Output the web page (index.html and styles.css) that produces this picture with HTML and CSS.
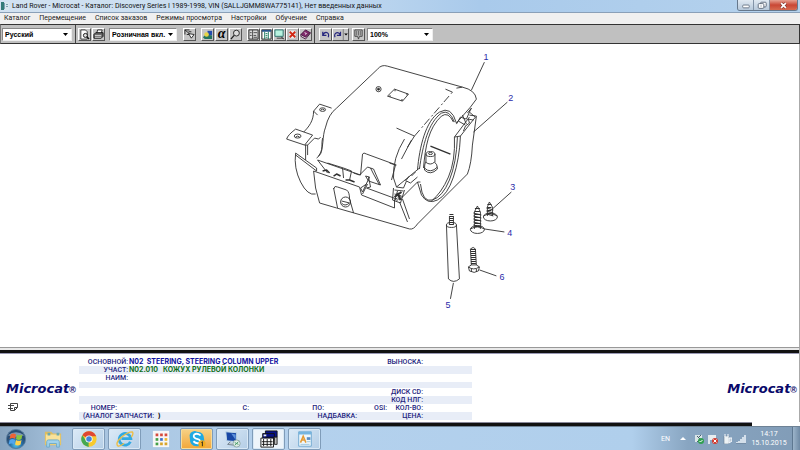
FILE: index.html
```html
<!DOCTYPE html>
<html lang="ru">
<head>
<meta charset="utf-8">
<title>Land Rover - Microcat</title>
<link rel="stylesheet" href="styles.css">
</head>
<body>
<header class="titlebar">
  <svg class="app-icon" viewBox="0 0 9 8"><path d="M0 0h3v8H0z" fill="#347b78"/><path d="M4 0h4v8H4z" fill="#d9e7ee"/><path d="M3 1h1v6H3zM5 2h2v1H5zM5 4h2v1H5z" fill="#7fa2b1"/></svg>
  <h1 class="title">Land Rover - Microcat - Каталог: Discovery Series I 1989-1998, VIN (SALLJGMM8WA775141), Нет введенных данных</h1>
  <div class="window-buttons">
    <button class="wbtn" aria-label="Свернуть"><svg viewBox="0 0 16 9"><rect x="5" y="4" width="7" height="3" rx="1" fill="#fff" stroke="#6b7787"/></svg></button>
    <button class="wbtn" aria-label="Восстановить"><svg viewBox="0 0 16 9"><rect x="7" y="1" width="6" height="5" rx="1" fill="#fff" stroke="#5d6a7b"/><rect x="4.500" y="2.500" width="6" height="5" rx="1" fill="#fff" stroke="#5d6a7b"/><path d="M7 4.500h1v1H7z" fill="#5d6a7b"/></svg></button>
    <button class="wbtn close" aria-label="Закрыть"><svg viewBox="0 0 16 9"><path d="M5.500 2l5 5M10.500 2l-5 5" stroke="#74352f" stroke-width="3"/><path d="M5.500 2l5 5M10.500 2l-5 5" stroke="#fff" stroke-width="1.800"/></svg></button>
  </div>
</header>
<nav class="menu">
  <a href="#">Каталог</a><a href="#">Перемещение</a><a href="#">Список заказов</a><a href="#">Режимы просмотра</a><a href="#">Настройки</a><a href="#">Обучение</a><a href="#">Справка</a>
</nav>
<div class="toolbar">
  <div class="group first">
    <label class="drop wide"><select aria-label="Язык"><option>Русский</option></select><svg viewBox="0 0 5 3"><path d="M0 0h5L2.500 3z"/></svg></label>
  </div>
  <div class="group">
    <button class="tool" aria-label="Просмотр печати"><svg viewBox="0 0 12 12"><path d="M2 1h5l2 2v8H2z" fill="#fff" stroke="#333"/><circle cx="7" cy="7" r="2.200" fill="#ddd" stroke="#111"/><path d="M8.500 8.500l2.500 2.500" stroke="#111" stroke-width="1.500"/></svg></button>
    <button class="tool" aria-label="Печать"><svg viewBox="0 0 12 12"><path d="M4 5l1-4h5L9 5z" fill="#fff" stroke="#222"/><path d="M1 6l2-2h8v4l-2 2H1z" fill="#666" stroke="#111"/><path d="M2 7h7M2 9h7" stroke="#ddd"/></svg></button>
  </div>
  <label class="drop mid"><select aria-label="Цена"><option>Розничная вкл.</option></select><svg viewBox="0 0 5 3"><path d="M0 0h5L2.500 3z"/></svg></label>
  <div class="group nav">
    <button class="tool" aria-label="Выбор"><svg viewBox="0 0 12 12"><path d="M1 1h5M1 1v5M1 1l6 5M5 3h3M3 6h3" stroke="#222" fill="none"/><path d="M5 5l6 1-3 4z" fill="#fff" stroke="#222"/></svg></button>
  </div>
  <div class="group">
    <button class="tool" aria-label="Графика"><svg viewBox="0 0 12 12"><path d="M6 2h5v5H6z" fill="#244bad"/><path d="M1 9l3-3 7 1v4H3z" fill="#23745f"/><circle cx="5" cy="6" r="2.500" fill="#e6d447"/></svg></button>
    <button class="tool alpha" aria-label="Алфавитный указатель">α</button>
    <button class="tool" aria-label="Поиск"><svg viewBox="0 0 12 12"><circle cx="7" cy="4.500" r="3.200" fill="#ddd" stroke="#222"/><path d="M4.500 7L1 11" stroke="#222" stroke-width="1.500"/></svg></button>
  </div>
  <div class="group lists">
    <button class="tool" aria-label="Список"><svg viewBox="0 0 12 12"><path d="M1 1h10v10H1z" fill="#ddd" stroke="#222"/><path d="M5 1v10M6 4h4M6 7h3M6 9h4M2 4h2M2 7h2" stroke="#444"/></svg></button>
    <button class="tool" aria-label="Таблица"><svg viewBox="0 0 12 12"><path d="M1 1h10v10H1z" fill="#fff" stroke="#222"/><path d="M1 2h10" stroke="#27528a" stroke-width="2"/><path d="M4 3v8M8 3v8M5 5h2M5 7h2M5 9h2" stroke="#16765b"/></svg></button>
    <button class="tool" aria-label="Экран"><svg viewBox="0 0 12 12"><path d="M1 1h9v7H1z" fill="#b8f2df" stroke="#286d69"/><path d="M3 10h7M8 9l3 2" stroke="#333"/></svg></button>
    <button class="tool" aria-label="Удалить"><svg viewBox="0 0 12 12"><path d="M2 1h8v10H2z" fill="#eee" stroke="#aaa"/><path d="M3 3l6 6M9 3l-6 6" stroke="#d12713" stroke-width="2"/></svg></button>
    <button class="tool" aria-label="Книга"><svg viewBox="0 0 12 12"><path d="M1 6l5-5 5 3-5 6z" fill="#81296c" stroke="#45143d"/><path d="M1 6v2l5 3 5-6V4L6 9z" fill="#eee" stroke="#45143d"/><path d="M5 4l2 1-1 1" stroke="#fff" fill="none"/></svg></button>
  </div>
  <div class="group history">
    <button class="tool" aria-label="Назад"><svg viewBox="0 0 12 12"><path d="M3 3v4h4M3 7c2-5 8-4 6 2" fill="none" stroke="#27277e" stroke-width="1.300"/></svg></button>
    <button class="tool fork" aria-label="Вперед"><svg viewBox="0 0 16 12"><path d="M8 3v4H4M8 7C6 2 0 4 2 9" fill="none" stroke="#27277e" stroke-width="1.300"/><path d="M11 0v12" stroke="#777"/><path d="M12 5h4l-2 2z"/></svg></button>
  </div>
  <button class="tool note" aria-label="Заметка"><svg viewBox="0 0 12 12"><path d="M2 1h8v7H7l-1 3-1-3H2z" fill="#bbb" stroke="#444"/><path d="M4 2v5M6 2v5M8 2v5" stroke="#666"/></svg></button>
  <label class="drop zoom"><select aria-label="Масштаб"><option>100%</option></select><svg viewBox="0 0 5 3"><path d="M0 0h5L2.500 3z"/></svg></label>
</div>
<main class="canvas">
  <svg class="diagram" viewBox="0 44 800 303" role="img" aria-label="Кожух рулевой колонки">
    <g class="ink">
      <!-- upper shroud -->
      <path d="M319 156C325 148 322 137 326 127Q329 114 337 108L378 69Q382 64 388 66L463 87Q476 90 477 99L471 107 457 123"/>
      <path d="M323 138C321 147 325 152 317 158M397 128L415 136M408 147L415 136"/>
      <path d="M415 136L453 92" stroke-dasharray="8 3 2 2"/><path d="M446 89l7 3M457 88l6-1"/>
      <path d="M388 96L395 89 409 94 403 101Z"/>
      <circle cx="379" cy="89" r="2.600"/><circle cx="379" cy="89" r="1" class="fill"/>
      <path d="M390 96h1M395 90h1M407 94h1M402 100h1" stroke-width="2"/>
      <!-- brackets -->
      <path d="M332 108L320 104 314 111 318 115M314 111C314 121 309 127 304 132M296 129L313 135 305 145 287 139Q288 135 296 129ZM305 145L308 145 315 138 319 139 321 137M306 145V160M308 145V155"/>
      <ellipse cx="323" cy="109.500" rx="3" ry="1.800"/><ellipse cx="298" cy="136" rx="3.400" ry="2"/><path d="M296 137q2-2 4 0M321 110q2-2 4 0"/>
      <!-- lower shroud -->
      <path d="M296 153Q294 168 301 182T316 194M296 153L317 168V171L296 155M314 171L316 188 320 203 337 208 410 229Q414 230 418 224L468 174Q472 164 473 145L477 116 470 115"/>
      <path d="M314 171L360 187 362 195 395 208V200L398 198"/>
      <path d="M318 160L361 175 363 154Q364 152 367 154L397 165M318 160L328 173M328 163L344 168M343 168L344 178M344 168L352 171 350 180M354 173L360 175"/>
      <path d="M323 171l4-1 3 3M334 176l3-2 4 2M346 180l4 0 5 2" stroke-width="1.500"/>
      <path d="M360 175L368 167 374 169 381 185 369 181 366 176 370 177 363 192 361 188 367 184M369 177L371 187 367 188 397 199M368 184L363 194M371 168l3 6 6 11"/>
      <path d="M334 189Q335 185 338 187L347 190Q350 192 350 199L354 213M334 188L338 208"/>
      <circle cx="346" cy="202" r="5"/><path d="M342 201l8 2M342 203q3 4 8 0"/>
      <!-- steering opening -->
      <path d="M418 170C420 147 426 121 440 112Q452 105 457 123M420 169C423 146 429 122 442 113Q450 109 455 122M424 168C426 146 429 128 442 116Q449 111 454 122"/>
      <path d="M457 124L461 117 467 119 470 112 476 117 461 136 455 137 470 117M459 121l7 4M463 115l4 9M464 131l2-5 4-3-1-4 5 1M470 112l2-4-4 5"/>
      <path d="M461 136Q460 159 454 177T438 200T422 195L418 182M458 137Q457 163 450 180T433 200T421 184M455 137Q456 161 449 177T432 201"/>
      <path d="M412 140L402 159M405 139Q393 158 394 178L397 187 420 168M390 163L396 165 392 180M397 187L404 188 407 181 411 183 418 177M400 200L418 182 421 182M400 202L408 222M403 199L410 219M394 188L393 200 401 203 405 190M395 190l9 1M395 194l7 2M398 191l-3 10M402 196l-5 5M406 181l4-5M412 176l4-4" />
      <path d="M398 193l3 7M395 197l7-5" stroke-width="2"/>
      <path d="M431 146L451 154" stroke-width="1.300"/>
      <ellipse cx="431" cy="154" rx="4.500" ry="2.500"/><ellipse cx="431" cy="153.500" rx="2" ry="1"/><path d="M426.500 154V162M435.500 154V162M426 162Q425 164 425 170Q431 176 438 169Q438 164 435 162Q431 166 426 162M425 168Q431 174 438 167"/>
      <!-- rod and fasteners -->
      <ellipse cx="452" cy="225" rx="5" ry="2.500" fill="#fff"/><path d="M447 225L449 279Q454 284 460 279L457 225"/>
      <path d="M450 216v9M454 216v9"/><path d="M452 214V225" stroke-width="4" stroke-dasharray="1 1"/>
      <ellipse cx="478" cy="229.500" rx="7" ry="4" fill="#fff"/><path d="M471 229q7-4 14 0M475 229V212L478 206 481 212V229M474 213l8 2M474 216l8 2M474 219l8 2M474 222l8 2M474 225l8 2"/><path d="M478 208V228" stroke-width="5" stroke-dasharray="1 2"/>
      <ellipse cx="491" cy="217" rx="7" ry="4" fill="#fff"/><path d="M484 216q7-4 14 0M488 216V207L490 202 493 207V216M487 208l7 2M487 211l7 2M487 214l7 2"/><path d="M490 204V216" stroke-width="4" stroke-dasharray="1 2"/>
      <path d="M471 249Q474 246 476 249L477 266M471 249L472 266"/><path d="M474 249V266" stroke-width="5" stroke-dasharray="1 1"/><path d="M469 267l3-2h5l3 2-1 4q-4 3-9 0Z" fill="#fff"/><path d="M469 267q5 4 11 0M472 269v3M477 269v3"/>
      <!-- callout lines -->
      <path d="M485 62L472 90M508 102L474 132M512 192L493 209M485 229L505 232M454 283L451 299M480 270L497 276"/>
    </g>
    <g class="callouts"><text x="484" y="60">1</text><text x="509" y="101">2</text><text x="511" y="190">3</text><text x="508" y="236">4</text><text x="446" y="308">5</text><text x="500" y="280">6</text></g>
  </svg>
</main>
<section class="details">
  <div class="brand-left">
    <div class="brand">Microcat<span>®</span></div>
    <svg class="page-icon" viewBox="0 0 10 10"><path d="M2.500 1.500h7v4l-3 3h-4zM9.500 5.500h-3v3M0 3.500h6M0 6.500h5" fill="none" stroke="#444"/></svg>
  </div>
  <div class="fields">
    <div class="row"><span>ОСНОВНОЙ:</span><b class="main-name">N02&nbsp; STEERING, STEERING COLUMN UPPER</b><span>ВЫНОСКА:</span></div>
    <div class="row"><span>УЧАСТ:</span><b class="section-name">N02.010&nbsp;&nbsp; КОЖУХ РУЛЕВОЙ КОЛОНКИ</b></div>
    <div class="row"><span>НАИМ:</span></div>
    <div class="row"></div>
    <div class="row"><i></i><i></i><span>ДИСК CD:</span></div>
    <div class="row"><i></i><i></i><span>КОД НЛГ:</span></div>
    <div class="row numbers"><span>НОМЕР:</span><span>C:</span><span>ПО:</span><span>OSI:</span><span>КОЛ-ВО:</span></div>
    <div class="row prices"><span>(АНАЛОГ ЗАПЧАСТИ:</span><b>)</b><span>НАДБАВКА:</span><span>ЦЕНА:</span></div>
  </div>
  <div class="brand brand-right">Microcat<span>®</span></div>
</section>
<div class="bottom-rule"></div>
<footer class="taskbar">
  <button class="start" aria-label="Пуск"><svg viewBox="0 0 24 24"><defs><radialGradient id="orb" cy=".8"><stop stop-color="#53c6ec"/><stop offset=".6" stop-color="#2871aa"/><stop offset="1" stop-color="#294e75"/></radialGradient></defs><circle cx="12" cy="12" r="10.500" fill="url(#orb)" stroke="#587d9e"/><path d="M3 8Q12 1 21 8Q12 11 3 8" fill="#b5cce0" opacity=".6"/><path d="M6 7q3-2 6 0l-1 5q-3-2-6 0z" fill="#ef6335"/><path d="M13 7q3 2 6 0l-1 5q-3 2-6 0z" fill="#8ac53f"/><path d="M5 13q3-2 6 0l-1 5q-3-2-6 0z" fill="#51a5ed"/><path d="M12 13q3 2 6 0l-1 5q-3 2-6 0z" fill="#ffd34b"/></svg></button>
  <button class="task plain" aria-label="Проводник"><svg viewBox="0 0 20 20"><path d="M1 2h7l2 2h9v13H1z" fill="#dfbd5e"/><path d="M2 5h16v11H2z" fill="#f8e29b"/><path d="M4 3h3v3H4zM14 3h3v3h-3z" fill="#6ba9b1"/><path d="M3 19v-6q0-2 2-2h10q2 0 2 2v6h-3v-4H6v4z" fill="#a0d2ed" stroke="#6ba9c8"/></svg></button>
  <button class="task" aria-label="Chrome"><svg viewBox="0 0 20 20"><circle cx="10" cy="10" r="8.500" fill="#f7ca2e"/><path d="M10 10L2.600 5.700A8.500 8.500 0 0 1 17.400 5.700L18 7H10z" fill="#df4734"/><path d="M2.600 5.700L8 14l2 4.500A8.500 8.500 0 0 1 2.600 5.700z" fill="#45a855"/><path d="M7 12l3 1-1 5.500L4 14z" fill="#45a855"/><circle cx="10" cy="10" r="4" fill="#fff"/><circle cx="10" cy="10" r="3.100" fill="#4285dd"/></svg></button>
  <button class="task" aria-label="Internet Explorer"><svg viewBox="0 0 20 20"><path d="M16 13a6.500 6.500 0 1 1 .5-3.500H6" fill="none" stroke="#32a9e2" stroke-width="3"/><path d="M2 18Q-1 14 6 8T18 2Q20 4 17 8M2 18q3 0 7-3" fill="none" stroke="#edbd43" stroke-width="1.500"/></svg></button>
  <button class="task plain" aria-label="Приложения"><svg viewBox="0 0 20 20"><path d="M1 1h18v18H1z" fill="#f7f7f7"/><path d="M4 4h3v3H4zM9 4h3v3H9zM14 4h3v3h-3z" fill="#d54c3e"/><path d="M4 9h3v3H4z" fill="#43a047"/><path d="M9 9h3v3H9z" fill="#3d70ca"/><path d="M14 9h3v3h-3z" fill="#edb72e"/><path d="M4 14h3v3H4z" fill="#43a047"/><path d="M9 14h3v3H9zM14 14h3v3h-3z" fill="#d8a52c"/></svg></button>
  <button class="task alert" aria-label="Skype"><svg viewBox="0 0 20 20"><path d="M3 3q4-3 7-1 8 0 8 9 1 7-7 7-9 1-9-9Q1 5 3 3z" fill="#20a9e2"/><path d="M14 6q-4-3-7-1-2 3 2 4.500l3 1q3 2 0 4-3 1-6-2" fill="none" stroke="#fff" stroke-width="2"/><circle cx="15.500" cy="15.500" r="4" fill="#f1ac20"/><path d="M15 14l1-1v5" fill="none" stroke="#222"/></svg></button>
  <button class="task" aria-label="Удаленный рабочий стол"><svg viewBox="0 0 20 20"><path d="M2 2l12 1v10L3 12z" fill="#1847a5" stroke="#c4dce9"/><path d="M8 4l5 1v6z" fill="#5d91db"/><path d="M7 13l-3 3 8 1" fill="#bdc9d2" stroke="#71808d"/><circle cx="14" cy="15" r="4" fill="#dcebe5" stroke="#8da5a4"/><path d="M12 14l2 1-2 2M16 13l-2 2 2 1" stroke="#3d955a" fill="none"/></svg></button>
  <button class="task active" aria-label="Microcat"><svg viewBox="0 0 20 20"><path d="M6 1h13v7H6zM3 4h13v7H3z" fill="#07128a" stroke="#111"/><path d="M4 5h3v2H4z" fill="#e8edf8"/><path d="M16 8h3v8h-3z" fill="#bbb" stroke="#222"/><path d="M1 9h14v10H1z" fill="#fff" stroke="#111"/><path d="M4 10v8M8 10v8M12 10v8M2 13h12M2 16h12" stroke="#111"/></svg></button>
  <button class="task" aria-label="Редактор"><svg viewBox="0 0 20 20"><path d="M3 2h14v16H3z" fill="#edf7fc" stroke="#6ba5ce"/><path d="M3 2h14v3H3z" fill="#75b5df"/><path d="M5 14l3-7 3 7M6 11h4" fill="none" stroke="#e39b36" stroke-width="1.700"/><path d="M12 8h4v3h-4z" fill="#598cc1"/><path d="M5 16h10M12 13h4" stroke="#9cc5dd"/></svg></button>
  <div class="tray">
    <span class="lang">EN</span>
    <svg class="caret" viewBox="0 0 6 4"><path d="M0 3h6L3 0z" fill="#fff"/></svg>
    <svg viewBox="0 0 10 10"><path d="M1 1h7v7H1z" fill="#d9e4e7"/><path d="M3 2l3 3-3 3M7 1L4 4" stroke="#4a6170" fill="none"/><circle cx="7" cy="7" r="3" fill="#31a052"/><path d="M5.500 7l1 1 2-2" stroke="#fff" fill="none"/></svg>
    <svg viewBox="0 0 10 10"><path d="M1 1v9" stroke="#fff" stroke-width="1.500"/><path d="M2 1h6v5H2z" fill="#e8edf0"/><circle cx="7" cy="7" r="3" fill="#d33d32"/><path d="M5.500 5.500l3 3M8.500 5.500l-3 3" stroke="#fff"/></svg>
    <svg viewBox="0 0 10 10"><path d="M2 2h5v8H2z" fill="#edf3f5" stroke="#697e91" stroke-width=".6"/><path d="M3 0v3M6 0v3M7 4h3v3L7 9z" stroke="#f9fbff" fill="#bac9d6"/></svg>
    <svg viewBox="0 0 10 10"><path d="M1 9V8M3 9V7M5 9V5M7 9V3M9 9V1" stroke="#eef4fa" stroke-width="1.500"/><path d="M0 10h10" stroke="#647b93"/></svg>
    <time class="clock">14:17<br>15.10.2015</time>
    <button class="show-desktop" aria-label="Показать рабочий стол"></button>
  </div>
</footer>
</body>
</html>
```
FILE: styles.css
```css
* { box-sizing: border-box; }
body {
  margin: 0;
  min-height: 100vh;
  display: flex;
  flex-direction: column;
  background: #fff;
  color: #111;
  font-family: Roboto, "Noto Sans", sans-serif;
  font-size: 7px;
  overflow-x: hidden;
}
button { margin: 0; padding: 0; border: 0; font: inherit; }
svg { display: block; }

.titlebar {
  height: 13px;
  display: flex;
  align-items: center;
  padding-left: 1px;
  background: linear-gradient(90deg, #d2e2f1, #c3daf0 40%, #a9caeb 60%, #b5d2ed);
  border-bottom: 1px solid #8aa0b8;
}
.app-icon { width: 9px; height: 8px; margin-right: 2px; }
.title { flex: 1; margin: 0; font-size: 7px; line-height: 12px; font-weight: 400; white-space: nowrap; }
.window-buttons { display: flex; align-self: flex-start; height: 11px; margin-right: 2px; border: 1px solid #66788c; border-top: 0; border-radius: 0 0 3px 3px; overflow: hidden; }
.wbtn { width: 16px; background: linear-gradient(#e0e9f2, #b6c8da); border-right: 1px solid #8293a7; }
.wbtn svg { width: 15px; height: 9px; }
.wbtn.close { width: 27px; border: 0; background: linear-gradient(#e6a192, #c94735 50%, #d66a50); }
.wbtn.close svg { margin: auto; }

.menu { height: 11px; display: flex; align-items: center; gap: 9px; padding-left: 4px; background: #f0f0f0; }
.menu a { color: #222; text-decoration: none; line-height: 11px; white-space: nowrap; }

.toolbar { height: 20px; display: flex; align-items: center; padding-left: 1px; background: #c0c0c0; border: 1px solid #333; border-left-color: #777; }
.group { display: flex; align-items: center; gap: 1px; height: 18px; }
.first { padding-right: 3px; margin-right: 2px; border-right: 1px solid #444; }
.nav { margin: 0 5px 0 6px; }
.lists { gap: 0; margin-left: 5px; padding-right: 2px; margin-right: 4px; border-right: 1px solid #444; }
.history { gap: 0; }
.tool { width: 13px; height: 13px; background: #c6c6c6; border: 1px solid; border-color: #fff #555 #555 #fff; display: flex; align-items: center; justify-content: center; }
.tool svg { width: 11px; height: 11px; }
.tool.fork { width: 17px; }
.tool.fork svg { width: 15px; }
.alpha { font: italic 700 14px/10px "Liberation Serif", serif; }
.note { margin: 0 2px 0 3px; }
.drop { position: relative; height: 13px; background: #fff; }
.drop select { appearance: none; width: 100%; height: 13px; padding: 0 0 0 2px; border: 1px solid #888; border-right-color: #eee; border-bottom-color: #eee; border-radius: 0; background: #fff; color: #000; font: 700 7px/11px "Liberation Sans", sans-serif; display: block; }
.drop svg { position: absolute; right: 4px; top: 5px; width: 5px; height: 3px; pointer-events: none; }
.wide { width: 70px; }
.mid { width: 68px; margin-left: 4px; }
.zoom { width: 66px; }

.canvas { flex: 1; min-height: 0; display: flex; border-right: 1px solid #aaa; }
.diagram { width: 100%; height: auto; flex: 1; }
.ink { fill: none; stroke: #303030; stroke-width: .9; stroke-linejoin: round; }
.ink .fill { fill: #222; }
.callouts { fill: #2b2ba8; font: 9px "Liberation Sans", sans-serif; }

.details {
  display: flex;
  height: 75px;
  padding-top: 3px;
  border-top: 1px solid #999;
  border-right: 1px solid #aaa;
  background: linear-gradient(#e8e8e8 2px, #111 2px 5px, #9999b4 5px 6px, #fff 6px);
}
.brand-left { width: 79px; padding: 30px 0 0 6px; }
.brand { font: italic 700 13px/16px "DejaVu Sans", sans-serif; color: #09096a; white-space: nowrap; }
.brand span { font: 700 9px/8px "Liberation Sans", sans-serif; }
.brand-right { margin: 30px 0 0 auto; padding-right: 2px; }
.page-icon { width: 10px; height: 10px; margin: 5px 0 0 2px; }
.fields { width: 393px; height: 62px; margin-top: 7px; display: grid; grid-template-rows: repeat(8, 1fr); color: #24247e; font: 500 7px/8px Roboto, "Liberation Sans", sans-serif; white-space: nowrap; }
.row { display: grid; grid-template-columns: 49px 243px 52px; align-items: center; }
.row:nth-child(even) { background: #e8edf7; }
.row span { text-align: right; }
.row b { padding-left: 1px; font-family: Inter, "Liberation Sans", sans-serif; font-weight: 700; }
.main-name { color: #1111a0; }
.section-name { color: #107020; }
.numbers { grid-template-columns: 38px 132px 75px 63px 36px; }
.prices { grid-template-columns: 75px 30px 173px 66px; }
.prices b { padding-left: 4px; color: #111; }

.bottom-rule { height: 4px; width: 94%; border-top: 1px solid #888899; background: #111; }
.taskbar { height: 24px; display: flex; align-items: center; gap: 3px; padding-left: 5px; border-top: 1px solid #6e8295; background: linear-gradient(90deg, #87a4bf, #a6c2dd 8%, #b4d1ed 35%, #b0cfec 79%, #88a5c1 86%, #819cb7); }
.start { width: 22px; height: 22px; margin-right: 6px; background: none; }
.start svg { width: 22px; height: 22px; }
.task { width: 33px; height: 22px; background: linear-gradient(135deg, #dceaf7, #b4cee6); border: 1px solid #7f9cb9; border-radius: 2px; box-shadow: inset 0 0 0 1px #d9e9f6; display: flex; align-items: center; justify-content: center; }
.task svg { width: 18px; height: 18px; }
.task.plain { background: none; border-color: transparent; box-shadow: none; }
.task.alert { background: linear-gradient(#f7d287, #f2a638); box-shadow: inset 0 0 0 1px #f7dc99; }
.task.active { background: #edf4fa; }
.tray { flex: 1; align-self: stretch; display: flex; align-items: center; justify-content: flex-end; gap: 4px; color: #fff; }
.tray svg { width: 10px; height: 10px; }
.lang { margin-right: 6px; }
.tray .caret { width: 6px; height: 4px; margin-right: 4px; }
.clock { width: 38px; text-align: center; line-height: 9px; white-space: nowrap; }
.show-desktop { width: 8px; align-self: stretch; border-left: 1px solid #5e7891; background: linear-gradient(90deg, #9cb4ca, #6f8aa5); }
```
